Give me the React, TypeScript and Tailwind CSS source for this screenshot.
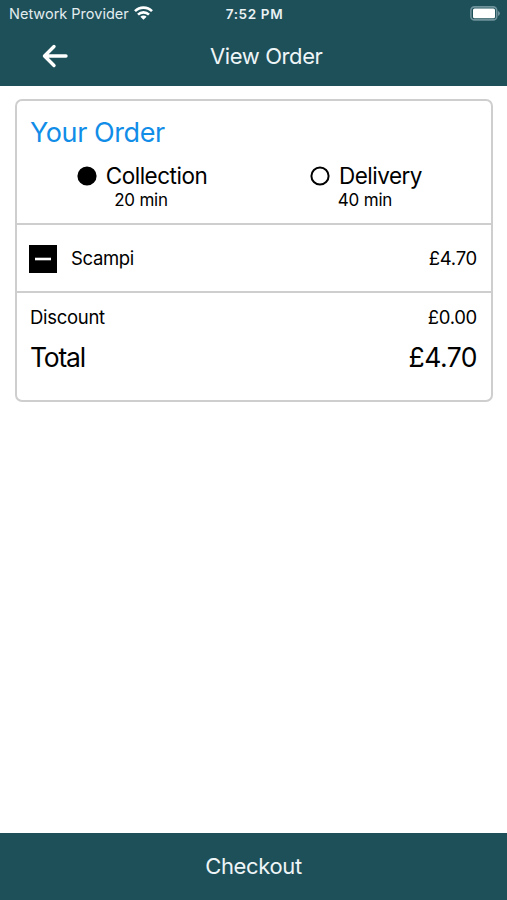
import React, { useState } from 'react';

interface OrderItem {
  name: string;
  price: string;
}

interface Method {
  id: string;
  label: string;
  time: string;
}

const items: OrderItem[] = [{ name: 'Scampi', price: '£4.70' }];

const methods: Method[] = [
  { id: 'collection', label: 'Collection', time: '20 min' },
  { id: 'delivery', label: 'Delivery', time: '40 min' },
];

const StatusBar: React.FC = () => (
  <div className="grid grid-cols-3 items-center h-7 pl-[9px] pr-[7px] text-[14.5px]">
    <div className="flex items-center gap-[5px] whitespace-nowrap text-[#e3edef]">
      <span>Network Provider</span>
      <svg className="-mt-0.5 text-white" width="19" height="14" viewBox="0 0 19 14" fill="none" stroke="currentColor" strokeWidth="2.6">
        <path d="M1 5.2a12 12 0 0 1 17 0" />
        <path d="M4 8.6a7.8 7.8 0 0 1 11 0" />
        <path d="M9.5 13.8 6.4 10.8a4.4 4.4 0 0 1 6.2 0Z" fill="currentColor" stroke="none" />
      </svg>
    </div>
    <span className="text-center font-semibold text-[13.5px] tracking-[0.65px] text-[#e9f1f3]">7:52 PM</span>
    <svg className="justify-self-end -mt-0.5" width="30" height="15" viewBox="0 0 30 15">
      <rect x="0.9" y="0.9" width="25.8" height="13" rx="3.5" fill="none" stroke="#6f929b" strokeWidth="1.6" />
      <rect x="3" y="2.6" width="22" height="9.6" rx="1.5" fill="#fff" />
      <path d="M28 5a2.6 2.6 0 0 1 0 5Z" fill="#6f929b" />
    </svg>
  </div>
);

const App: React.FC = () => {
  const [method, setMethod] = useState('collection');

  return (
    <div className="flex flex-col h-screen bg-white text-black font-['Inter',sans-serif]">
      <header className="h-[86px] bg-[#1e505a] text-white">
        <StatusBar />
        <div className="flex items-center h-14 pl-[42px]">
          <button aria-label="Back">
            <svg width="26" height="24" viewBox="0 0 26 24" fill="none" stroke="currentColor" strokeWidth="3.4" strokeLinecap="round" strokeLinejoin="round">
              <path d="M24 12H3M12 2.5 2.5 12 12 21.5" />
            </svg>
          </button>
          <h1 className="ml-[142px] text-[22px] tracking-[-0.4px] text-[#eef5f7]">View Order</h1>
        </div>
      </header>

      <main className="flex-1 pl-[15px] pr-[14px] pt-[13px]">
        <section className="h-[303px] border-2 border-[#cecece] rounded-[7px]">
          <div className="h-[124px] pt-[14px] border-b-2 border-[#cecece]">
            <h2 className="px-[13px] text-[27px] leading-9 tracking-[-0.42px] text-[#118de8]">Your Order</h2>
            <div className="grid grid-cols-2 mt-2.5 px-[13px]">
              {methods.map((m) => (
                <button key={m.id} onClick={() => setMethod(m.id)} className="flex flex-col items-center">
                  <span className="flex items-center gap-[9px] text-[22.5px] leading-[30px] tracking-[-0.5px]">
                    <svg width="20" height="20" viewBox="0 0 20 20" stroke="currentColor" strokeWidth="2">
                      <circle cx="10" cy="10" r="8.6" fill={method === m.id ? 'currentColor' : 'none'} />
                    </svg>
                    {m.label}
                  </span>
                  <span className="pr-0.5 text-[17px] leading-[18px] tracking-[-0.2px]">{m.time}</span>
                </button>
              ))}
            </div>
          </div>
          {items.map((item) => (
            <div key={item.name} className="flex items-center h-[68px] pl-3 pr-3.5 pt-px border-b-2 border-[#cecece] text-[18.5px] tracking-[-0.35px]">
              <button aria-label="Remove" className="mr-[14px]">
                <svg width="28" height="28" viewBox="0 0 28 28">
                  <path d="M0 0h28v28H0z" />
                  <path d="M6 14h16" stroke="#fff" strokeWidth="2.6" />
                </svg>
              </button>
              <span>{item.name}</span>
              <span className="ml-auto tracking-[-0.25px]">{item.price}</span>
            </div>
          ))}
          <div className="pl-[13px] pr-3.5 pt-[10px]">
            <div className="flex justify-between text-[18.5px] leading-7 tracking-[-0.3px]">
              <span>Discount</span>
              <span>£0.00</span>
            </div>
            <div className="flex justify-between mt-2 text-[26.5px] leading-9 tracking-[-0.5px]">
              <span className="tracking-[-1.2px]">Total</span>
              <span>£4.70</span>
            </div>
          </div>
        </section>
      </main>

      <footer className="flex items-center justify-center h-[67px] bg-[#1e505a] text-[#eef5f7] text-[22px] tracking-[-0.35px]">
        Checkout
      </footer>
    </div>
  );
};

export default App;
